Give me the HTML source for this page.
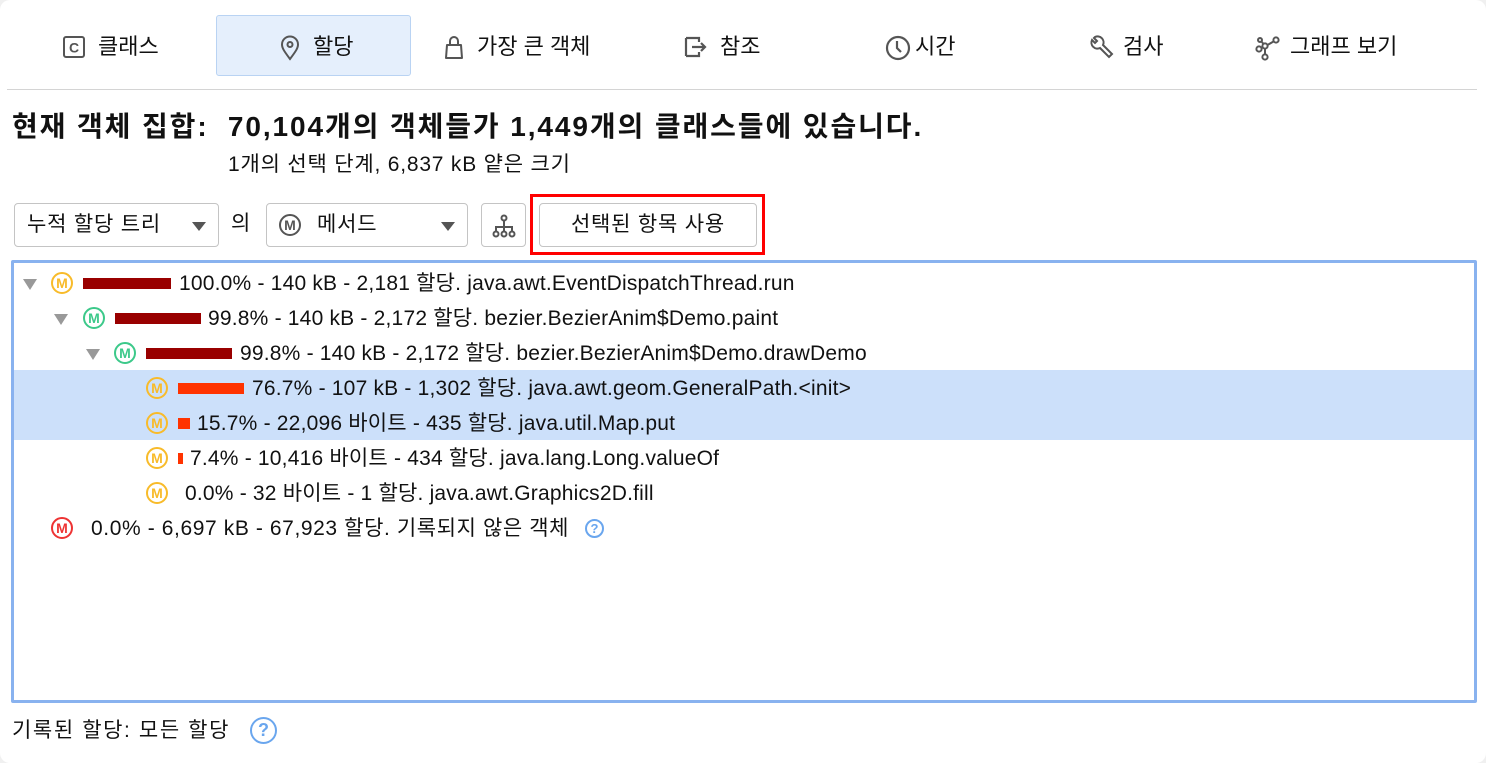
<!DOCTYPE html>
<html><head><meta charset="utf-8"><style>
*{box-sizing:border-box;margin:0;padding:0}
body{width:1486px;height:763px;background:#f0f0f0;font-family:"Liberation Sans","Noto Sans CJK KR",sans-serif;color:#111;overflow:hidden;position:relative}
.card{position:absolute;left:0;top:0;width:1486px;height:763px;background:#fff;border-radius:10px}
.a{position:absolute;white-space:nowrap}
.tab{position:absolute;top:31px;font-size:22px;line-height:32px;white-space:nowrap}
.tab svg{position:absolute;top:4px}
.sel{position:absolute;left:216px;top:15px;width:195px;height:61px;background:#e5effc;border:1px solid #b9d3f3;border-radius:3px}
.dd{position:absolute;top:203px;height:44px;border:1px solid #c4c4c4;border-radius:4px;background:#fff;font-size:21px;letter-spacing:.8px;line-height:42px}
.tri{position:absolute;width:0;height:0;border-left:7px solid transparent;border-right:7px solid transparent;border-top:9px solid #555}
.row{position:absolute;left:14px;height:35px;font-size:21px;letter-spacing:.2px;line-height:35px;white-space:nowrap}
.m{position:absolute;width:22px;height:22px;border-radius:50%;border:2px solid;font-size:14px;font-weight:bold;line-height:18px;text-align:center;letter-spacing:0}
.bar{position:absolute;height:11px}
.exp{position:absolute;width:0;height:0;border-left:7px solid transparent;border-right:7px solid transparent;border-top:11px solid #999}
</style></head><body><div class="card">
<div class="sel"></div>
<div class="tab" style="left:62px"><svg width="24" height="24" viewBox="0 0 24 24"><rect x="2" y="2" width="20" height="20" rx="2" fill="none" stroke="#555" stroke-width="2"/><text x="12" y="17.5" font-size="14" font-weight="bold" text-anchor="middle" fill="#555" font-family="Liberation Sans">C</text></svg><span style="margin-left:36px">클래스</span></div>
<div class="tab" style="left:278px"><svg width="24" height="26" viewBox="0 0 24 26"><path d="M12 24C6 16 4 13 4 9.5a8 8 0 0 1 16 0C20 13 18 16 12 24z" fill="none" stroke="#555" stroke-width="2"/><circle cx="12" cy="9.5" r="2.5" fill="none" stroke="#555" stroke-width="2"/></svg><span style="margin-left:35px">할당</span></div>
<div class="tab" style="left:443px"><svg width="22" height="26" viewBox="0 0 22 26"><path d="M4 10h14l1 13H3z" fill="none" stroke="#555" stroke-width="2" stroke-linejoin="round"/><path d="M7 10V6a4 4 0 0 1 8 0v4" fill="none" stroke="#555" stroke-width="2"/></svg><span style="margin-left:34px">가장 큰 객체</span></div>
<div class="tab" style="left:683px"><svg width="26" height="24" viewBox="0 0 26 24"><path d="M3 3h13v4M3 21h13v-4M3 3v18" fill="none" stroke="#555" stroke-width="2.2"/><path d="M9 12h13M18 8l4 4-4 4" fill="none" stroke="#555" stroke-width="2.2"/></svg><span style="margin-left:37px">참조</span></div>
<div class="tab" style="left:885px"><svg width="26" height="26" viewBox="0 0 26 26"><circle cx="13" cy="13" r="11" fill="none" stroke="#555" stroke-width="2.2"/><path d="M12 6v7l4 4" fill="none" stroke="#555" stroke-width="2.2"/></svg><span style="margin-left:30px">시간</span></div>
<div class="tab" style="left:1090px"><svg width="24" height="26" viewBox="0 0 24 26"><path d="M4 3l3 3-2 2-3-3a6 6 0 0 0 8 8l9 9 3-3-9-9a6 6 0 0 0-8-8z" fill="none" stroke="#555" stroke-width="2"/></svg><span style="margin-left:33px">검사</span></div>
<div class="tab" style="left:1255px"><svg width="26" height="26" viewBox="0 0 26 26"><g fill="none" stroke="#555" stroke-width="2"><circle cx="21" cy="5" r="2.6"/><circle cx="10" cy="11" r="2.6"/><circle cx="4" cy="14" r="2.6"/><circle cx="10" cy="22" r="2.6"/><circle cx="5" cy="5" r="2"/><path d="M18.5 6.5L12.5 10M7.6 12.3L6.4 12.8M10 13.6v5.8M6.5 6.5l2 2.5"/></g></svg><span style="margin-left:35px">그래프 보기</span></div>
<div class="a" style="left:7px;top:89px;width:1470px;height:1px;background:#d4d4d4"></div>
<div class="a" style="left:12px;top:108px;font-size:28px;letter-spacing:1.9px;font-weight:bold;line-height:38px">현재 객체 집합:&nbsp; 70,104개의 객체들가 1,449개의 클래스들에 있습니다.</div>
<div class="a" style="left:228px;top:151px;font-size:21px;letter-spacing:.8px;line-height:28px">1개의 선택 단계, 6,837 kB 얕은 크기</div>
<div class="dd" style="left:14px;width:205px"><span style="margin-left:12px">누적 할당 트리</span><div class="tri" style="left:177px;top:18px"></div></div>
<div class="a" style="left:231px;top:210px;font-size:21px;line-height:28px">의</div>
<div class="dd" style="left:266px;width:202px"><div class="m" style="left:12px;top:10px;border-color:#555;color:#555">M</div><span style="margin-left:50px">메서드</span><div class="tri" style="left:174px;top:18px"></div></div>
<div class="dd" style="left:481px;width:45px"><svg style="position:absolute;left:9px;top:9px" width="26" height="26" viewBox="0 0 26 26"><g fill="none" stroke="#555" stroke-width="2"><circle cx="13" cy="5" r="2.5"/><circle cx="5" cy="21" r="2.5"/><circle cx="13" cy="21" r="2.5"/><circle cx="21" cy="21" r="2.5"/><path d="M13 7.5v11M5 18.5V14h16v4.5"/></g></svg></div>
<div class="a" style="left:530px;top:194px;width:235px;height:61px;border:3px solid #f00"></div>
<div class="dd" style="left:539px;width:218px;text-align:center">선택된 항목 사용</div>
<div class="a" style="left:11px;top:260px;width:1466px;height:443px;border:3px solid #89b2ef;border-radius:2px"></div>
<div class="a" style="left:14px;top:370px;width:1460px;height:70px;background:#cce0fa"></div>
<div class="row" style="top:266px"><div class="exp" style="left:9px;top:13px"></div><div class="m" style="left:37px;top:6px;border-color:#f8bb2a;color:#f8bb2a">M</div><div class="bar" style="left:69px;top:12px;width:88px;background:#990000"></div><span style="position:absolute;left:165px">100.0% - 140 kB - 2,181 할당. java.awt.EventDispatchThread.run</span></div>
<div class="row" style="top:301px"><div class="exp" style="left:40px;top:13px"></div><div class="m" style="left:69px;top:6px;border-color:#3cc98a;color:#3cc98a">M</div><div class="bar" style="left:101px;top:12px;width:86px;background:#990000"></div><span style="position:absolute;left:194px">99.8% - 140 kB - 2,172 할당. bezier.BezierAnim$Demo.paint</span></div>
<div class="row" style="top:336px"><div class="exp" style="left:72px;top:13px"></div><div class="m" style="left:100px;top:6px;border-color:#3cc98a;color:#3cc98a">M</div><div class="bar" style="left:132px;top:12px;width:86px;background:#990000"></div><span style="position:absolute;left:226px">99.8% - 140 kB - 2,172 할당. bezier.BezierAnim$Demo.drawDemo</span></div>
<div class="row" style="top:371px"><div class="m" style="left:132px;top:6px;border-color:#f8bb2a;color:#f8bb2a">M</div><div class="bar" style="left:164px;top:12px;width:66px;background:#ff3300"></div><span style="position:absolute;left:238px">76.7% - 107 kB - 1,302 할당. java.awt.geom.GeneralPath.&lt;init&gt;</span></div>
<div class="row" style="top:406px"><div class="m" style="left:132px;top:6px;border-color:#f8bb2a;color:#f8bb2a">M</div><div class="bar" style="left:164px;top:12px;width:12px;background:#ff3300"></div><span style="position:absolute;left:183px">15.7% - 22,096 바이트 - 435 할당. java.util.Map.put</span></div>
<div class="row" style="top:441px"><div class="m" style="left:132px;top:6px;border-color:#f8bb2a;color:#f8bb2a">M</div><div class="bar" style="left:164px;top:12px;width:5px;background:#ff3300"></div><span style="position:absolute;left:176px">7.4% - 10,416 바이트 - 434 할당. java.lang.Long.valueOf</span></div>
<div class="row" style="top:476px"><div class="m" style="left:132px;top:6px;border-color:#f8bb2a;color:#f8bb2a">M</div><span style="position:absolute;left:171px">0.0% - 32 바이트 - 1 할당. java.awt.Graphics2D.fill</span></div>
<div class="row" style="top:511px"><div class="m" style="left:37px;top:6px;border-color:#ee3333;color:#ee3333">M</div><span style="position:absolute;left:77px;letter-spacing:.6px">0.0% - 6,697 kB - 67,923 할당. 기록되지 않은 객체</span><div class="m" style="left:571px;top:8px;width:19px;height:19px;border-color:#6aa6ee;color:#6aa6ee;font-size:13px;line-height:15px">?</div></div>
<div class="a" style="left:12px;top:716px;font-size:21px;letter-spacing:1.6px;line-height:30px">기록된 할당: 모든 할당</div>
<div class="m" style="left:250px;top:717px;width:27px;height:27px;border-color:#6aa6ee;color:#6aa6ee;font-size:18px;line-height:23px;border-width:2.5px">?</div>
</div></body></html>
